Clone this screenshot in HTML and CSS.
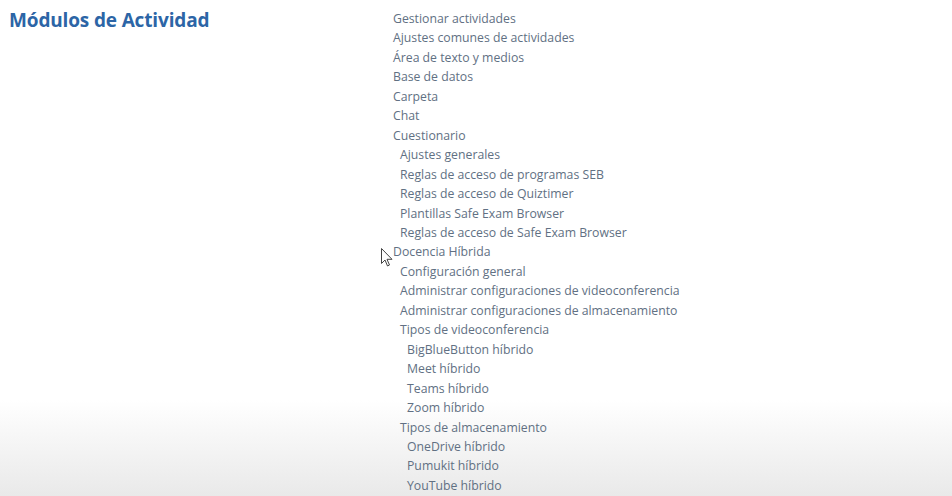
FILE: index.html
```html
<!DOCTYPE html>
<html lang="es">
<head>
<meta charset="utf-8">
<title>Módulos de Actividad</title>
<link rel="stylesheet" href="styles.css">
</head>
<body>
<div class="page">
  <h2 class="title">Módulos de Actividad</h2>
  <ul class="tree">
    <li>Gestionar actividades</li>
    <li>Ajustes comunes de actividades</li>
    <li>Área de texto y medios</li>
    <li>Base de datos</li>
    <li>Carpeta</li>
    <li>Chat</li>
    <li>Cuestionario</li>
    <li class="l1">Ajustes generales</li>
    <li class="l1">Reglas de acceso de programas SEB</li>
    <li class="l1">Reglas de acceso de Quiztimer</li>
    <li class="l1">Plantillas Safe Exam Browser</li>
    <li class="l1">Reglas de acceso de Safe Exam Browser</li>
    <li class="cursor-row">Docencia Híbrida<svg class="cursor" width="12" height="19" viewBox="0 0 12 19"><path d="M0.5 0.5 L0.5 15.5 L4 12 L6.5 18 L8.5 17 L6 11.3 L11 11.3 Z" fill="#fff" stroke="#444" stroke-width="1" stroke-linejoin="round"/></svg></li>
    <li class="l1">Configuración general</li>
    <li class="l1">Administrar configuraciones de videoconferencia</li>
    <li class="l1">Administrar configuraciones de almacenamiento</li>
    <li class="l1">Tipos de videoconferencia</li>
    <li class="l2">BigBlueButton híbrido</li>
    <li class="l2">Meet híbrido</li>
    <li class="l2">Teams híbrido</li>
    <li class="l2">Zoom híbrido</li>
    <li class="l1">Tipos de almacenamiento</li>
    <li class="l2">OneDrive híbrido</li>
    <li class="l2">Pumukit híbrido</li>
    <li class="l2">YouTube híbrido</li>
  </ul>
</div>
</body>
</html>
```

FILE: styles.css
```css
html, body {
  margin: 0;
  padding: 0;
  height: 100%;
}
body {
  background: linear-gradient(to bottom, #ffffff 0px, #ffffff 400px, #e9e9e9 496px);
  font-family: "Open Sans", "Noto Sans", sans-serif;
  overflow: hidden;
}
.page {
  display: flex;
  align-items: flex-start;
}
.title {
  margin: 0;
  width: 384px;
  padding: 7px 0 0 9px;
  box-sizing: border-box;
  font-size: 19px;
  font-weight: 700;
  color: #2c65a6;
  letter-spacing: -0.15px;
}
.tree {
  list-style: none;
  margin: 0;
  padding: 9px 0 0 9px;
  font-size: 12.25px;
  line-height: 19.46px;
  color: #617083;
}
.tree li {
  white-space: nowrap;
}
.tree .l1 { padding-left: 7px; }
.tree .l2 { padding-left: 14px; }
.cursor-row {
  position: relative;
}
.cursor {
  position: absolute;
  left: -12px;
  top: 6px;
}
```
